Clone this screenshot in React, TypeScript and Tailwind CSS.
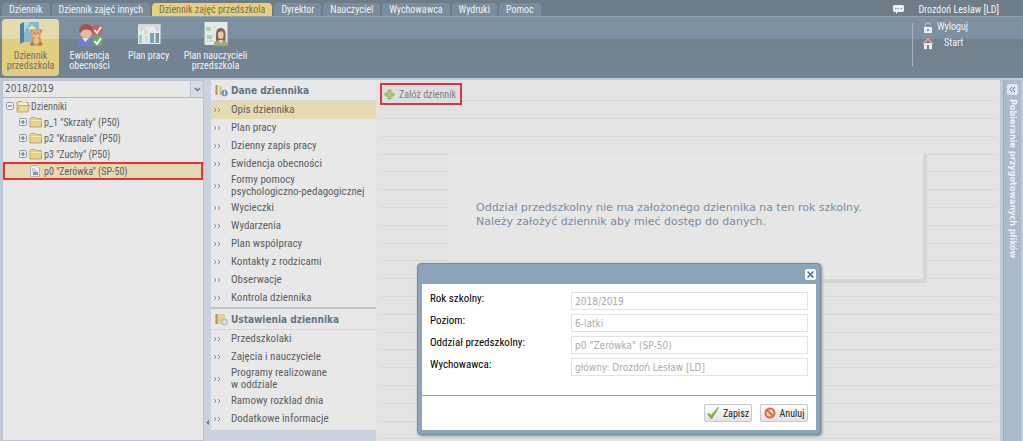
import type { ReactNode } from 'react';

const tabs = ['Dziennik', 'Dziennik zajęć innych', 'Dziennik zajęć przedszkola', 'Dyrektor', 'Nauczyciel', 'Wychowawca', 'Wydruki', 'Pomoc'];

const journalMenu = [
  'Opis dziennika',
  'Plan pracy',
  'Dzienny zapis pracy',
  'Ewidencja obecności',
  'Formy pomocy\npsychologiczno-pedagogicznej',
  'Wycieczki',
  'Wydarzenia',
  'Plan współpracy',
  'Kontakty z rodzicami',
  'Obserwacje',
  'Kontrola dziennika',
];

const settingsMenu = [
  'Przedszkolaki',
  'Zajęcia i nauczyciele',
  'Programy realizowane\nw oddziale',
  'Ramowy rozkład dnia',
  'Dodatkowe informacje',
];

const fields = [
  { id: 'rok', label: 'Rok szkolny:', value: '2018/2019' },
  { id: 'poziom', label: 'Poziom:', value: '6-latki' },
  { id: 'oddzial', label: 'Oddział przedszkolny:', value: 'p0 "Zerówka" (SP-50)' },
  { id: 'wychowawca', label: 'Wychowawca:', value: 'główny: Drozdoń Lesław [LD]' },
];

function JournalIcon() {
  return (
    <svg width="26" height="26" viewBox="0 0 26 26" aria-hidden="true">
      <path d="M2 3 6 1v20l-4 2z" fill="#55809b" />
      <path d="M6 1h15v20H6z" fill="#87b5d2" />
      <path d="M6 1h6L6 12z" fill="#b5d3e2" />
      <path d="m14 3 1.5 3 3 .4-2.2 2 .5 3-2.8-1.4-2.8 1.4.5-3-2.2-2 3-.4z" fill="#e7e7ba" />
      <circle cx="14" cy="10" r="2" fill="#c9935b" />
      <circle cx="22.500" cy="10" r="2" fill="#c9935b" />
      <circle cx="18.300" cy="13" r="5" fill="#dda96c" />
      <ellipse cx="18.300" cy="20" rx="5" ry="5" fill="#cc965c" />
      <ellipse cx="18.300" cy="20" rx="2.800" ry="3.200" fill="#e8bd87" />
      <circle cx="14" cy="23" r="2" fill="#b97b47" />
      <circle cx="22.500" cy="23" r="2" fill="#b97b47" />
      <ellipse cx="18.300" cy="15" rx="2.400" ry="1.800" fill="#f0d2a5" />
      <path d="M16 12h1m2.600 0h1M17.800 14.300h1" stroke="#714b38" strokeWidth="1" />
    </svg>
  );
}

function AttendanceIcon() {
  return (
    <svg width="26" height="26" viewBox="0 0 26 26" aria-hidden="true">
      <path d="M0 25c0-6 2-8 8-8s8 2 8 8z" fill="#6884d2" />
      <path d="M5 17h7l-3.500 4z" fill="#e3e5eb" />
      <circle cx="9" cy="11.500" r="6" fill="#e3bb9e" />
      <path d="M2.500 11C1.500 6 5 3 9 3s8 3 7 8l-1 1c-1-3-3-3.500-6-3.500S5 10 3.500 12z" fill="#a65350" />
      <circle cx="20.500" cy="9" r="5.200" fill="#d45a57" />
      <path d="m17.500 9 2.500 3 4-6" fill="none" stroke="#fff" strokeWidth="1.800" />
      <circle cx="20.500" cy="20" r="5.200" fill="#6da968" />
      <path d="m17.500 20 2.500 3 4-6" fill="none" stroke="#fff" strokeWidth="1.800" />
    </svg>
  );
}

function PlanIcon() {
  return (
    <svg width="26" height="26" viewBox="0 0 26 26" aria-hidden="true">
      <path d="M2 3h22.500v20H2z" fill="#e4eae9" />
      <path d="M2 3h22.500v2.500H2z" fill="#d0d9d7" />
      <path d="M4 7h5M4 9h3M18 7h5M20 9h3" stroke="#b9c5c5" />
      <path d="M3 14h3v8H3z" fill="#a4cdb5" />
      <path d="M8.500 9h3v4h-3z" fill="#e6d2a3" />
      <path d="M9 14h3v8H9z" fill="#d3dcdc" />
      <path d="M14 12h4v10h-4z" fill="#7ca3b2" />
      <path d="M19.500 12H23v10h-3.500z" fill="#8098a5" />
    </svg>
  );
}

function TeacherIcon() {
  return (
    <svg width="26" height="26" viewBox="0 0 26 26" aria-hidden="true">
      <path d="M1.500 1h23v23h-23z" fill="#e4eae7" />
      <path d="M3 6h5v4H3zM4 14h5v4H4z" fill="#b3d1ad" />
      <path d="M10 6h3M3 20h7M10 15h2" stroke="#c7d2d0" />
      <path d="M13 21V13c0-4 1.500-6 4.500-6s5 2 5 6v8z" fill="#8b6552" />
      <path d="M15 11.500 19 10l1.500 2v3c0 2-1 3-2.500 3s-3-1-3-3z" fill="#e8c6a9" />
      <path d="M10.500 25c0-4 2-5.500 5-5.500h4c3 0 5 1.500 5 5.500z" fill="#98af70" />
      <path d="m15.500 19 2.500 4 2-4z" fill="#ead3bf" />
    </svg>
  );
}

function FolderIcon({ open = false }: { open?: boolean }) {
  return (
    <svg width="14" height="13" viewBox="0 0 14 13" aria-hidden="true" className="shrink-0">
      <path d="M1 11V2.500L2 1.500h4l1 1h5.500V11z" fill="#e6d192" stroke="#c3ab64" />
      {open ? (
        <>
          <path d="M3 2.500h8V8H3z" fill="#f1eee2" />
          <path d="m3.500 5.500h10L11.500 12H1z" fill="#ead895" stroke="#c3ab64" />
        </>
      ) : (
        <path d="M1.500 4.500h11" stroke="#f1e3ae" />
      )}
    </svg>
  );
}

function Toggle({ expanded = false }: { expanded?: boolean }) {
  return (
    <svg width="9" height="9" viewBox="0 0 9 9" aria-hidden="true" className="shrink-0">
      <rect x=".5" y=".5" width="7" height="7" rx="1" fill="#edf0f4" stroke="#8d9cad" />
      <path d={expanded ? 'M2 4h4' : 'M2 4h4M4 2v4'} stroke="#596879" />
    </svg>
  );
}

function SheetIcon() {
  return (
    <svg width="10" height="12" viewBox="0 0 10 12" aria-hidden="true" className="shrink-0">
      <path d="M.5.500h6l3 3v8h-9z" fill="#e9edf2" stroke="#a9b4c2" />
      <path d="M2 4h3M2 6h5" stroke="#a6b3c5" />
      <path d="M3 7h5v3H3z" fill="#8594aa" />
    </svg>
  );
}

function BookIcon({ gear = false }: { gear?: boolean }) {
  return (
    <svg width="13" height="13" viewBox="0 0 13 13" aria-hidden="true" className="shrink-0">
      <path d="M2 1h8v10H2z" fill={gear ? '#e6cf9d' : '#e4e4e0'} />
      <path d="M1.500 1v10" stroke="#b99357" strokeWidth="2" />
      {!gear && <path d="M5.500 2v9" stroke="#d3b866" strokeWidth="1.500" />}
      <circle cx="9.500" cy="9" r="3" fill={gear ? '#cdd2d7' : '#7ba1ca'} stroke={gear ? '#a0a8af' : '#6d8cae'} strokeWidth=".7" />
      {gear ? <circle cx="9.500" cy="9" r="1" fill="#eee" /> : <path d="M9.500 7v1M9.500 8.500v2" stroke="#fff" />}
    </svg>
  );
}

function RibbonButton({ label, icon, active = false, width }: { label: string; icon: ReactNode; active?: boolean; width: string }) {
  return (
    <button
      className={`flex flex-col items-center rounded-sm pt-[2px] whitespace-pre-line ${width} ${
        active ? 'bg-linear-to-b from-[#e5dcae] from-35% to-[#e2cd80] to-35% text-[#77735f]' : 'text-[#f0f3f5]'
      }`}
    >
      {icon}
      <span className="pt-1 text-[10px] leading-[10px]">{label}</span>
    </button>
  );
}

function Menu({ title, items, selected, gear }: { title: string; items: string[]; selected?: string; gear?: boolean }) {
  return (
    <nav>
      <h2 className="flex h-[21px] items-center gap-[3px] border-b border-[#d2d6da] pl-1 text-[10px] font-bold text-[#627689]">
        <BookIcon gear={gear} />
        {title}
      </h2>
      {items.map((item) => (
        <a
          key={item}
          href="#"
          className={`flex items-center whitespace-pre-line ${item.includes('\n') ? 'h-[26px]' : 'h-[18px]'} ${
            item === selected ? 'bg-[#e6dab2]' : ''
          }`}
        >
          <svg width="20" height="7" viewBox="0 0 20 7" aria-hidden="true" className="shrink-0">
            <path d="m3 1 2 2-2 2m4-4 2 2-2 2" fill="none" stroke="#8390a0" />
          </svg>
          <span className="font-['Roboto_Condensed','Roboto',sans-serif] text-[11px] leading-3">{item}</span>
        </a>
      ))}
    </nav>
  );
}

function DialogButton({ icon, children }: { icon: ReactNode; children: string }) {
  return (
    <button className="flex h-[18px] w-12 items-center justify-center gap-1 rounded-xs border border-[#c9c9c9] bg-linear-to-b from-white to-[#e3e3e3] font-['Roboto_Condensed','Roboto',sans-serif] text-[10px] text-[#222]">
      {icon}
      {children}
    </button>
  );
}

export default function App() {
  return (
    <div className="relative flex h-screen flex-col overflow-hidden bg-[#bfc9d3] font-['DejaVu_Sans_Condensed','DejaVu_Sans',sans-serif] text-[10px] text-[#5c5f63]">
      <header className="font-['Roboto_Condensed','Roboto',sans-serif] text-[#f0f3f5]">
        <div className="flex h-4 justify-between bg-[#6f7d89] pt-[3px]">
          <nav className="flex gap-[2px] pl-[2px]">
            {tabs.map((tab) => (
              <button
                key={tab}
                className={`rounded-t-sm px-[7px] text-[10px] leading-[13px] ${
                  tab === 'Dziennik zajęć przedszkola' ? 'bg-[#e5d07d] text-[#77735f]' : 'bg-[#7b8d9d]'
                }`}
              >
                {tab}
              </button>
            ))}
          </nav>
          <div className="flex items-center gap-[14px] pr-6 text-[10px] leading-[13px]">
            <svg width="11" height="9" viewBox="0 0 11 9" aria-hidden="true">
              <path d="M1 0h9l1 1v5l-1 1H5L3 9V7H1L0 6V1z" fill="#edf0f2" />
              <path d="M2 3.500h1.500m1 0H6m1.500 0H9" stroke="#8594a0" />
            </svg>
            <span>Drozdoń Lesław [LD]</span>
          </div>
        </div>
        <div className="flex h-[62px] justify-between border-t border-[#91a2b1] bg-linear-to-b from-[#7d90a1] from-36% via-[#72818d] via-36% to-[#728596] pt-[2px] pb-[2px]">
          <div className="flex pl-[2px]">
            <RibbonButton width="w-[57px]" active label={'Dziennik\nprzedszkola'} icon={<JournalIcon />} />
            <RibbonButton width="w-[61px]" label={'Ewidencja\nobecności'} icon={<AttendanceIcon />} />
            <RibbonButton width="w-[57px]" label="Plan pracy" icon={<PlanIcon />} />
            <RibbonButton width="w-[77px]" label={'Plan nauczycieli\nprzedszkola'} icon={<TeacherIcon />} />
          </div>
          <div className="mt-1 mr-[53px] flex h-[43px] w-[58px] border-l border-[#a5b2bd] pl-[10px] text-[10px] leading-4">
            <div className="-mt-1">
              <a href="#" className="flex items-center gap-[3px]">
                <svg width="11" height="11" viewBox="0 0 11 11" aria-hidden="true">
                  <path d="M2.500 5V3c0-3 5-3 5 0" fill="none" stroke="#b5bec6" strokeWidth="1.200" />
                  <path d="M1 5h8v6H1z" fill="#edf0f1" />
                  <path d="M5 7v2" stroke="#65717b" strokeWidth="1.500" />
                </svg>
                Wyloguj
              </a>
              <a href="#" className="flex items-center gap-[10px]">
                <svg width="11" height="11" viewBox="0 0 11 11" aria-hidden="true">
                  <path d="M1 5h8v6H1z" fill="#efefef" />
                  <path d="M7 1h2v3H7z" fill="#d85d61" />
                  <path d="m0 6 5-5 5 5" fill="none" stroke="#e0a3a5" strokeWidth="1.500" />
                  <path d="M4 7h2v4H4z" fill="#6f8190" />
                </svg>
                Start
              </a>
            </div>
          </div>
        </div>
      </header>

      <div className="flex min-h-0 flex-1 pt-[2px]">
        <aside className="ml-[2px] flex w-[202px] shrink-0 flex-col border border-[#bac3cf] bg-[#e8e8e8]">
          <div className="relative border-b border-[#b5bac0]">
            <select aria-label="Rok szkolny" className="block h-4 w-full appearance-none pl-[2px] text-[10px] leading-4">
              <option>2018/2019</option>
            </select>
            <span className="pointer-events-none absolute inset-y-0 right-0 flex w-[13px] items-center justify-center border-l border-[#bac3cf] bg-[#d5dbe3]">
              <svg width="7" height="5" viewBox="0 0 7 5" aria-hidden="true">
                <path d="m1 1 2.500 2.500L6 1" fill="none" stroke="#62748a" strokeWidth="1.500" />
              </svg>
            </span>
          </div>
          <ul className="font-['Roboto_Condensed','Roboto',sans-serif] text-[10px]">
            <li className="flex h-4 items-center gap-[1px] pl-[3px]">
              <Toggle expanded />
              <FolderIcon open />
              Dzienniki
            </li>
            {['p_1 "Skrzaty" (P50)', 'p2 "Krasnale" (P50)', 'p3 "Zuchy" (P50)'].map((name) => (
              <li key={name} className="flex h-4 items-center gap-[1px] pl-4">
                <Toggle />
                <FolderIcon />
                {name}
              </li>
            ))}
            <li className="flex h-[18px] items-center gap-1 border-2 border-[#ee3030] bg-[#e6dab2] pl-[25px]">
              <SheetIcon />
              p0 "Zerówka" (SP-50)
            </li>
          </ul>
        </aside>

        <div className="flex w-[7px] shrink-0 items-end justify-center bg-[#ccd2dd] pb-4">
          <svg width="4" height="5" viewBox="0 0 4 5" aria-hidden="true">
            <path d="M3 0v5L0 2.500z" fill="#707c8b" />
          </svg>
        </div>

        <div className="w-[165px] shrink-0 bg-[#ccd2dd]">
          <div className="bg-[#e8e8e8] pb-[2px]">
            <Menu title="Dane dziennika" items={journalMenu} selected="Opis dziennika" />
            <div className="border-t-2 border-[#bcc5cf]">
              <Menu title="Ustawienia dziennika" items={settingsMenu} gear />
            </div>
          </div>
        </div>

        <main className="min-w-0 flex-1 bg-[#e3e3e1] px-1 pt-[3px]">
          <div className="h-full bg-[repeating-linear-gradient(to_bottom,#e3e3e1_0_17px,#d8d8d6_17px_18px,#e3e3e1_18px_35px,#d8d8d6_35px_36px,#e3e3e1_36px_53px,#d8d8d6_53px_54px,#e3e3e1_54px_71px,#d8d8d6_71px_72px,#e3e3e1_72px_88px,#d8d8d6_88px_89px)]">
            <button className="flex h-[22px] w-[82px] items-center gap-1 border-2 border-[#dc3545] bg-[#dedede] pl-[2px] font-['Roboto_Condensed','Roboto',sans-serif] text-[10px] whitespace-nowrap text-[#7c7f82]">
              <svg width="11" height="11" viewBox="0 0 11 11" aria-hidden="true" className="shrink-0">
                <path d="M4 1h3v3h3v3H7v3H4V7H1V4h3z" fill="#a4ca7c" stroke="#83b45a" strokeWidth=".8" />
              </svg>
              Załóż dziennik
            </button>
            <div className="mt-[49px] mr-[69px] ml-17 flex h-[129px] items-center border-r-4 border-b-4 border-[#d6d6d5] bg-[#e6e6e6] pb-1 pl-7 font-['DejaVu_Sans',sans-serif] text-[11px] leading-[14px] text-[#7c8ba4]">
              <p>
                Oddział przedszkolny nie ma założonego dziennika na ten rok szkolny.
                <br />
                Należy założyć dziennik aby mieć dostęp do danych.
              </p>
            </div>
          </div>
        </main>

        <aside className="mr-[2px] ml-[3px] flex w-[18px] shrink-0 flex-col items-center border-l border-[#9cabb9] bg-[#abbaca] pt-1">
          <button aria-label="Rozwiń" className="flex size-[11px] shrink-0 items-center justify-center rounded-xs bg-[#dce6ef]">
            <svg width="7" height="7" viewBox="0 0 7 7" aria-hidden="true">
              <path d="M3 1 1 3.500 3 6m3-5L4 3.500 6 6" fill="none" stroke="#61758c" />
            </svg>
          </button>
          <span className="pt-1 text-[9px] leading-3 font-bold whitespace-nowrap text-[#edf1f5] [writing-mode:vertical-rl]">Pobieranie przygotowanych plików</span>
        </aside>
      </div>

      <section
        role="dialog"
        aria-label="Załóż dziennik"
        className="absolute top-[263px] left-[417px] w-[404px] rounded-sm border border-[#748ca2] bg-[#8ca4b9] px-1 pb-1 text-black shadow-[1px_1px_3px_#888]"
      >
        <div className="flex h-5 items-center justify-end">
          <button aria-label="Zamknij" className="flex size-[11px] items-center justify-center rounded-xs bg-white">
            <svg width="9" height="9" viewBox="0 0 9 9" aria-hidden="true">
              <path d="m1.500 1.500 6 6m0-6-6 6" stroke="#446a9a" strokeWidth="1.500" />
            </svg>
          </button>
        </div>
        <form className="bg-white" onSubmit={(e) => e.preventDefault()}>
          <div className="flex flex-col gap-1 border-b border-[#969fae] px-2 pt-2 pb-[19px]">
            {fields.map((field) => (
              <div key={field.id} className="flex h-[18px] items-start">
                <label htmlFor={field.id} className="w-[141px] shrink-0 font-['Roboto_Condensed','Roboto',sans-serif] text-[11px] leading-[14px]">
                  {field.label}
                </label>
                <input
                  id={field.id}
                  defaultValue={field.value}
                  readOnly
                  className="h-[18px] min-w-0 flex-1 border border-[#e2e2e2] px-[3px] text-[10px] text-[#aaa]"
                />
              </div>
            ))}
          </div>
          <div className="flex justify-end gap-2 px-2 py-2">
            <DialogButton
              icon={
                <svg width="12" height="12" viewBox="0 0 12 12" aria-hidden="true">
                  <path d="m0 7 2-1 2 2 7-8 1 .5L5 12H4z" fill="#79b739" />
                </svg>
              }
            >
              Zapisz
            </DialogButton>
            <DialogButton
              icon={
                <svg width="12" height="12" viewBox="0 0 12 12" aria-hidden="true">
                  <circle cx="6" cy="6" r="4.500" fill="#f4d9c8" stroke="#dc6938" strokeWidth="2" />
                  <path d="m3 3 6 6" stroke="#dc6938" strokeWidth="2" />
                </svg>
              }
            >
              Anuluj
            </DialogButton>
          </div>
        </form>
      </section>
    </div>
  );
}
